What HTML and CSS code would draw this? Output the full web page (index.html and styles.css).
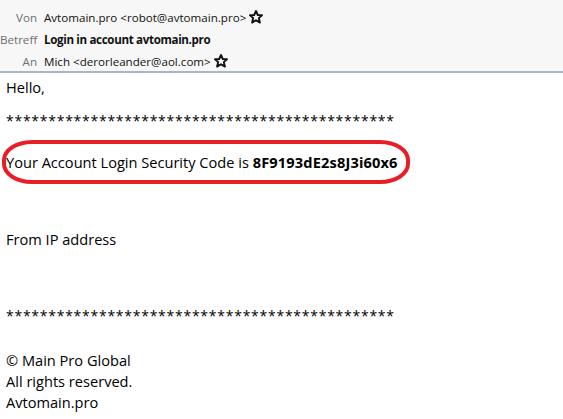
FILE: index.html
```html
<!DOCTYPE html>
<html lang="de">
<head>
  <meta charset="UTF-8">
  <title>Login in account avtomain.pro</title>
  <link rel="stylesheet" href="styles.css">
</head>
<body>
<div class="kopf">
  <div class="zeile">
    <span class="feld">Von</span>
    <span class="wert">Avtomain.pro &lt;robot@avtomain.pro&gt;</span>
    <svg class="stern" viewBox="0 0 14 14"><path d="M7 1 L8.8 5 L13 5.3 L9.8 8.1 L10.9 12.6 L7 10.2 L3.1 12.6 L4.2 8.1 L1 5.3 L5.2 5 Z"/></svg>
  </div>
  <div class="zeile">
    <span class="feld">Betreff</span>
    <span class="wert fett">Login in account avtomain.pro</span>
  </div>
  <div class="zeile">
    <span class="feld">An</span>
    <span class="wert">Mich &lt;derorleander@aol.com&gt;</span>
    <svg class="stern" viewBox="0 0 14 14"><path d="M7 1 L8.8 5 L13 5.3 L9.8 8.1 L10.9 12.6 L7 10.2 L3.1 12.6 L4.2 8.1 L1 5.3 L5.2 5 Z"/></svg>
  </div>
</div>

<div class="nachricht">
  <p>Hello,</p>
  <p class="sterne">**********************************************</p>
  <p class="code">Your Account Login Security Code is <b>8F9193dE2s8J3i60x6</b></p>
  <p class="ip">From IP address</p>
  <p class="sterne unten">**********************************************</p>
  <p class="fuss">© Main Pro Global<br>All rights reserved.<br>Avtomain.pro</p>
  <div class="markierung"></div>
</div>
</body>
</html>
```

FILE: styles.css
```css
body {
  margin: 0;
  background: #ffffff;
  font-family: "Open Sans", sans-serif;
}
.kopf {
  background: #f7f7f7;
  border-bottom: 2px solid #a5b8cb;
  padding: 6px 0 1px 0;
  height: 64px;
}
.zeile {
  display: flex;
  align-items: center;
  height: 22px;
  font-size: 11.6px;
}
.feld {
  width: 37px;
  text-align: right;
  color: #6e6e6e;
  padding-right: 7px;
}
.wert {
  color: #111111;
}
.fett {
  font-weight: bold;
  letter-spacing: -0.35px;
}
.stern {
  width: 14px;
  height: 14px;
  margin-left: 3px;
  fill: none;
  stroke: #111111;
  stroke-width: 1.9;
  stroke-linejoin: round;
}
.nachricht {
  position: relative;
  padding: 4px 6px;
  font-size: 14.6px;
  color: #000000;
}
.nachricht p {
  margin: 0;
  line-height: 21px;
}
.nachricht b {
  letter-spacing: 0.15px;
}
.sterne {
  margin-top: 12px !important;
  font-size: 14px;
  letter-spacing: 0.74px;
}
.code {
  margin-top: 21px !important;
}
.ip {
  margin-top: 56px !important;
}
.sterne.unten {
  margin-top: 55px !important;
}
.fuss {
  margin-top: 24px !important;
}
.markierung {
  position: absolute;
  left: 2px;
  top: 67px;
  width: 400px;
  height: 36px;
  border: 4px solid #e81e27;
  border-radius: 30px / 20px;
}
```
